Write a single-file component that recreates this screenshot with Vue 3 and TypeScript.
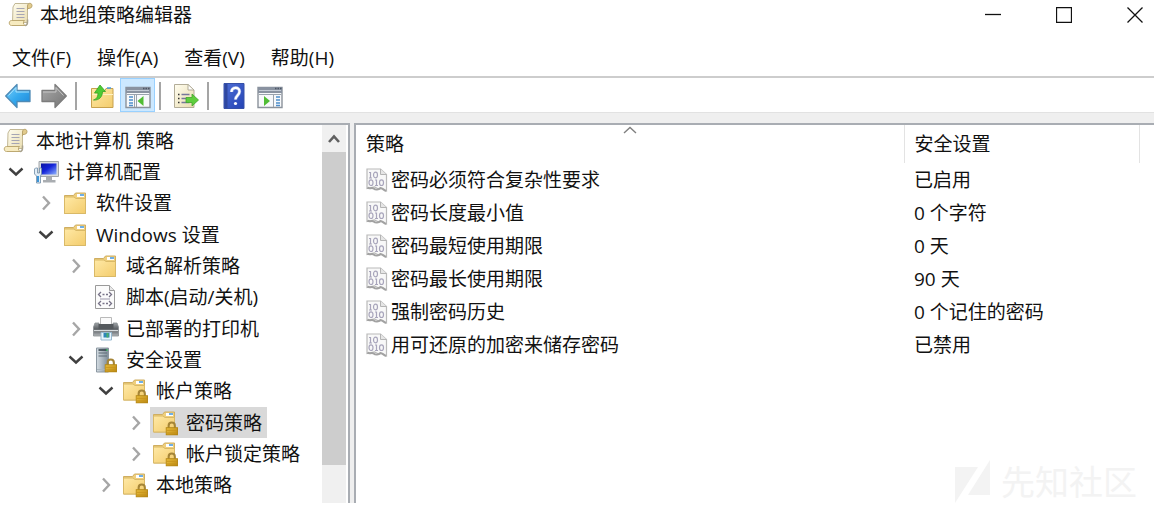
<script setup lang="ts">
import { ref } from 'vue'

interface TreeNode {
  label: string
  level: number
  icon: string
  state: 'open' | 'closed' | 'leaf'
}

interface Policy {
  name: string
  value: string
}

interface Tool {
  icon: string
  label: string
  active?: boolean
}

const menus: string[] = ['文件(F)', '操作(A)', '查看(V)', '帮助(H)']

const toolGroups: Tool[][] = [
  [
    { icon: 'back', label: '后退' },
    { icon: 'forward', label: '前进' },
  ],
  [
    { icon: 'up', label: '向上一级' },
    { icon: 'tree-pane', label: '显示/隐藏控制台树', active: true },
  ],
  [{ icon: 'export', label: '导出列表' }],
  [
    { icon: 'help', label: '帮助' },
    { icon: 'action-pane', label: '显示/隐藏操作窗格' },
  ],
]

const nodes: TreeNode[] = [
  { label: '本地计算机 策略', level: 0, icon: 'scroll', state: 'leaf' },
  { label: '计算机配置', level: 1, icon: 'computer', state: 'open' },
  { label: '软件设置', level: 2, icon: 'folder', state: 'closed' },
  { label: 'Windows 设置', level: 2, icon: 'folder', state: 'open' },
  { label: '域名解析策略', level: 3, icon: 'folder', state: 'closed' },
  { label: '脚本(启动/关机)', level: 3, icon: 'script', state: 'leaf' },
  { label: '已部署的打印机', level: 3, icon: 'printer', state: 'closed' },
  { label: '安全设置', level: 3, icon: 'server', state: 'open' },
  { label: '帐户策略', level: 4, icon: 'locked', state: 'open' },
  { label: '密码策略', level: 5, icon: 'locked', state: 'closed' },
  { label: '帐户锁定策略', level: 5, icon: 'locked', state: 'closed' },
  { label: '本地策略', level: 4, icon: 'locked', state: 'closed' },
]

const policies: Policy[] = [
  { name: '密码必须符合复杂性要求', value: '已启用' },
  { name: '密码长度最小值', value: '0 个字符' },
  { name: '密码最短使用期限', value: '0 天' },
  { name: '密码最长使用期限', value: '90 天' },
  { name: '强制密码历史', value: '0 个记住的密码' },
  { name: '用可还原的加密来储存密码', value: '已禁用' },
]

const selected = ref<string>('密码策略')
</script>

<template>
  <div class="window">
    <svg class="sprite" width="0" height="0" aria-hidden="true">
      <defs>
        <linearGradient id="g-blue" x1="0" y1="0" x2="1" y2="1">
          <stop offset="0" stop-color="#7fd3fb" />
          <stop offset="0.5" stop-color="#35a9ee" />
          <stop offset="1" stop-color="#1c86d6" />
        </linearGradient>
        <linearGradient id="g-gray" x1="0" y1="0" x2="1" y2="1">
          <stop offset="0" stop-color="#a9a9a9" />
          <stop offset="1" stop-color="#747474" />
        </linearGradient>
        <linearGradient id="g-folder" x1="0" y1="0" x2="1" y2="1">
          <stop offset="0" stop-color="#ffe9a6" />
          <stop offset="1" stop-color="#f3cc6c" />
        </linearGradient>
        <linearGradient id="g-lock" x1="0" y1="0" x2="1" y2="1">
          <stop offset="0" stop-color="#f0c544" />
          <stop offset="1" stop-color="#b9850f" />
        </linearGradient>
        <linearGradient id="g-help" x1="0" y1="0" x2="1" y2="1">
          <stop offset="0" stop-color="#4f6fd6" />
          <stop offset="1" stop-color="#2443b4" />
        </linearGradient>
        <linearGradient id="g-paper" x1="0" y1="0" x2="1" y2="1">
          <stop offset="0" stop-color="#fffdf0" />
          <stop offset="1" stop-color="#e9dcae" />
        </linearGradient>
        <linearGradient id="g-screen" x1="0" y1="0" x2="1" y2="1">
          <stop offset="0" stop-color="#0a12a0" />
          <stop offset="0.45" stop-color="#1424d8" />
          <stop offset="1" stop-color="#8fb4ff" />
        </linearGradient>
        <linearGradient id="g-printer" x1="0" y1="0" x2="0" y2="1">
          <stop offset="0" stop-color="#a0a4a8" />
          <stop offset="0.5" stop-color="#55595d" />
          <stop offset="1" stop-color="#b4b8bb" />
        </linearGradient>
        <linearGradient id="g-server" x1="0" y1="0" x2="1" y2="0">
          <stop offset="0" stop-color="#d5dde3" />
          <stop offset="1" stop-color="#7d8b97" />
        </linearGradient>
      </defs>

      <symbol id="i-back" viewBox="0 0 26 26">
        <path d="M.7 13 12 1.500v6H25v11H12v6Z" fill="url(#g-blue)" stroke="#4f8ab5" stroke-width="1.300" stroke-linejoin="round" />
        <path d="M3.500 12.500 11 4.500v4.500h13" fill="none" stroke="#a9e2fc" />
      </symbol>
      <symbol id="i-forward" viewBox="0 0 26 26">
        <path d="M25.300 13 14 1.500v6H1v11h13v6Z" fill="url(#g-gray)" stroke="#7c7c7c" stroke-width="1.300" stroke-linejoin="round" />
        <path d="M22.500 12.500 15 4.500v4.500H2" fill="none" stroke="#c6c6c6" />
      </symbol>
      <symbol id="i-up" viewBox="0 0 26 26">
        <path d="M2.500 8V5.500h8l2 2H16l1-2h7V24.500h-21.500Z" fill="url(#g-folder)" stroke="#c7a14e" />
        <path d="M3 11.500h21" stroke="#fff2c2" />
        <path d="M18 5h4" stroke="#4a9be0" stroke-width="1.500" />
        <path d="M4.500 17c3.500-1 4.500-4 4.500-7H5.500L11 2l5.500 6.500H13.500c0 5-3 9-9 8.500Z" fill="#4ecb34" stroke="#35a322" stroke-width="0.800" stroke-linejoin="round" />
      </symbol>
      <symbol id="i-tree-pane" viewBox="0 0 26 26">
        <path d="M1 4.500h24v20H1Z" fill="#f7f9fb" stroke="#8b929b" stroke-width="1.400" />
        <path d="M1 4h24v6H1Z" fill="#8992a0" />
        <path d="M2 7.500h22" stroke="#c2c9d3" />
        <path d="M18 5.500h1.500M20.500 5.500h1.500M23 5.500h1.500" stroke="#4b5564" stroke-width="1.300" />
        <path d="M2 11.500h22M9.500 11v13M11.500 11v13" stroke="#9aa3ae" />
        <path d="M4 14h4M4 17h4M4 20h4M4 22.500h4" stroke="#4f8ecb" stroke-width="1.400" />
        <path d="M18.500 13v10l-6-5Z" fill="#50bd35" />
      </symbol>
      <symbol id="i-action-pane" viewBox="0 0 26 26">
        <path d="M1 4.500h24v20H1Z" fill="#f7f9fb" stroke="#8b929b" stroke-width="1.400" />
        <path d="M1 4h24v6H1Z" fill="#8992a0" />
        <path d="M2 7.500h22" stroke="#c2c9d3" />
        <path d="M18 5.500h1.500M20.500 5.500h1.500M23 5.500h1.500" stroke="#4b5564" stroke-width="1.300" />
        <path d="M2 11.500h22M16.500 11v13" stroke="#9aa3ae" />
        <path d="M19 14h4M19 17h4M19 20h4M19 22.500h4" stroke="#4f8ecb" stroke-width="1.400" />
        <path d="M7 13v10l6-5Z" fill="#50bd35" />
      </symbol>
      <symbol id="i-export" viewBox="0 0 26 26">
        <path d="M1.500 1.500h13.500l6 5.500v17.500H1.500Z" fill="url(#g-paper)" stroke="#b3ad98" />
        <path d="M15 1.500V7h6Z" fill="#fff" stroke="#b3ad98" />
        <path d="M5 11.500h1.500M5 15.500h1.500M5 19.500h1.500" stroke="#333" stroke-width="1.500" />
        <path d="M8.500 11.500h8M8.500 15.500h6M8.500 19.500h8" stroke="#77789a" stroke-width="1.300" />
        <path d="M13 14.500h6V11l6.500 6-6.500 6v-3.500h-6Z" fill="#5fce3e" stroke="#43a72c" stroke-width="0.800" />
      </symbol>
      <symbol id="i-help" viewBox="0 0 26 26">
        <path d="M3 .500h20v25H3Z" fill="url(#g-help)" stroke="#3650a8" />
        <path d="M3.500 1h3v24h-3Z" fill="#2f479f" />
        <path d="M10.500 9c0-5.500 8-5.500 8-.500 0 4-4 4-4 8" fill="none" stroke="#8fa3e0" stroke-width="3.400" />
        <path d="M10.500 9c0-5.500 8-5.500 8-.500 0 4-4 4-4 8" fill="none" stroke="#fff" stroke-width="2.200" />
        <circle cx="14.500" cy="20.500" r="1.600" fill="#fff" />
      </symbol>

      <symbol id="i-scroll" viewBox="0 0 26 26">
        <path d="M7 1.500h14l-1.500 3v16H4.500L5 5Z" fill="url(#g-paper)" stroke="#c2b896" />
        <path d="M19.500 8V4c0-3.500 4.500-3.500 4.500-.500C24 6 22 6.500 20 6.500" fill="#e2cb8c" stroke="#b9a36b" />
        <path d="M3.500 18.500h13c-1.500 1-1.500 4 .5 5H3.500c-3 0-3-5 0-5Z" fill="#f7ebc0" stroke="#bda972" />
        <path d="M17 23.500c2 0 2.500-1.500 2.500-4v-2" fill="none" stroke="#a9a28c" stroke-width="1.600" />
        <path d="M8.500 6.500h8M8.500 9.500h8M8.500 12.500h8M8.500 15.500h8" stroke="#a6a5b4" stroke-width="1.200" />
      </symbol>
      <symbol id="i-computer" viewBox="0 0 26 26">
        <path d="M6 2.500h19.500v15H6Z" fill="#d9dcde" stroke="#a2a7ab" />
        <path d="M8 4.500h15.500v11H8Z" fill="url(#g-screen)" />
        <path d="M13 18h6v3h3.500v2.500H10V21h3Z" fill="#a9adb1" />
        <path d="M2.500 9h2v5h2V9h2v6l-1 2v7h-4v-7l-2-2v-5Z" fill="#e1edf6" stroke="#6e8ca4" stroke-width="0.800" />
        <path d="M5 17v6" stroke="#3c94d6" stroke-width="2" />
      </symbol>
      <symbol id="i-folder" viewBox="0 0 26 26">
        <path d="M1.500 5.500h9l2-2.500h10v20.500h-21Z" fill="#efcf7d" stroke="#cfae62" />
        <path d="M14 4h7v3h-7Z" fill="#fff" />
        <path d="M17 5h4" stroke="#4a9be0" stroke-width="1.600" />
        <path d="M1.500 7h9.500l2 1.500h9.500v15h-21Z" fill="url(#g-folder)" stroke="#d9b967" />
      </symbol>
      <symbol id="i-padlock" viewBox="0 0 12 14">
        <path d="M3 7V4.500c0-4 6-4 6 0V7" fill="none" stroke="#a58537" stroke-width="2" />
        <path d="M.5 6.500h11v7H.5Z" fill="url(#g-lock)" stroke="#b38616" />
        <path d="M1 9h10M1 11.500h10" stroke="#c6931b" />
      </symbol>
      <symbol id="i-locked" viewBox="0 0 26 26">
        <path d="M.5 4.500h9l2-2.500h10v20h-21Z" fill="#efcf7d" stroke="#cfae62" />
        <path d="M13 3h7v3h-7Z" fill="#fff" />
        <path d="M16 4h4" stroke="#4a9be0" stroke-width="1.600" />
        <path d="M.5 6h9.500l2 1.500h9.500V22h-21Z" fill="url(#g-folder)" stroke="#d9b967" />
        <use href="#i-padlock" x="12.500" y="11" width="12.500" height="14.500" />
      </symbol>
      <symbol id="i-script" viewBox="0 0 26 26">
        <path d="M2.500 1.500h14l5 5v18h-19Z" fill="#fbfbfb" stroke="#9a9a9a" />
        <path d="M16.500 1.500v5h5" fill="#e8e8e8" stroke="#9a9a9a" />
        <path d="M8 8 5.500 10.500 8 13M16 8l2.500 2.500L16 13M9.500 10.500h2M13 10.500h2M8 17l-2.500 2.500L8 22M16 17l2.500 2.500L16 22M9.500 19.500h2M13 19.500h2" fill="none" stroke="#777287" stroke-width="1.300" />
        <path d="M7 15h10" stroke="#9b97aa" />
      </symbol>
      <symbol id="i-printer" viewBox="0 0 26 26">
        <path d="M7.500 1.500h11v7h-11Z" fill="#fafafa" stroke="#b9b9b9" />
        <path d="M2 7h4v2h14V7h4l1.500 4v9H.5v-9Z" fill="url(#g-printer)" stroke="#888d91" stroke-width="0.800" />
        <path d="M5.500 8h15v6.500h-15Z" fill="#54585c" />
        <path d="M1 14.500h24" stroke="#d7dadc" stroke-width="1.300" />
        <path d="M8 16.500h10.500V24H8Z" fill="#e9f5fd" stroke="#96b9cf" />
        <path d="M10.500 17h6v4.500h-6Z" fill="#2f87b8" />
        <path d="M13.500 17h2v4.500h-2Z" fill="#4caf6b" />
      </symbol>
      <symbol id="i-server" viewBox="0 0 26 26">
        <path d="M3.500 1h12v24h-12Z" fill="url(#g-server)" stroke="#8c98a2" />
        <path d="M5.500 3h8.500" stroke="#2e3b46" stroke-width="1.500" />
        <path d="M5.500 6h8.500M5.500 9h8.500" stroke="#5d6b77" />
        <path d="M13 3h1.500" stroke="#33c25a" stroke-width="1.500" />
        <path d="M4 22.500h11" stroke="#aab5bd" />
        <use href="#i-padlock" x="11.500" y="11" width="12.500" height="14.500" />
      </symbol>
      <symbol id="i-policy" viewBox="0 0 22 24">
        <path d="M1 1h13.500l6 5.500V23l-4.500-2.500-3.500.5-4-2-7.500 1.500Z" fill="#f8f8f8" stroke="#bababa" stroke-width="1.200" />
        <path d="M14.500 1v5.500h6" fill="#e6e6e6" stroke="#b4b4b4" />
        <path d="M1.500 19.500c2 2 4-.500 6 1s5 1.500 7-.500c2 0 3 2 5.500 3" fill="none" stroke="#a2a2a2" stroke-width="2" />
        <g fill="none" stroke="#a8a5bb" stroke-width="1.200">
          <path d="M3 4.500h1.500v5.500M3 10h3M9 12h1.500v5.500M9 17.500h3" />
          <ellipse cx="9.500" cy="7" rx="2" ry="2.800" />
          <ellipse cx="5" cy="14.700" rx="2" ry="2.800" />
          <ellipse cx="15.500" cy="14.700" rx="2" ry="2.800" />
        </g>
      </symbol>
    </svg>

    <header class="titlebar">
      <svg class="icon"><use href="#i-scroll" /></svg>
      <h1 class="title">本地组策略编辑器</h1>
      <div class="controls">
        <button class="control" type="button" aria-label="最小化">
          <svg viewBox="0 0 16 16"><path d="M0 7.500h16" /></svg>
        </button>
        <button class="control" type="button" aria-label="最大化">
          <svg viewBox="0 0 16 16"><path d="M.5 .5h15v15H.5Z" /></svg>
        </button>
        <button class="control" type="button" aria-label="关闭">
          <svg viewBox="0 0 16 16"><path d="m.5 .5 15 15M15.500 .5l-15 15" /></svg>
        </button>
      </div>
    </header>

    <nav class="menubar">
      <button v-for="menu in menus" :key="menu" class="menu" type="button">{{ menu }}</button>
    </nav>

    <div class="toolbar" role="toolbar">
      <template v-for="(group, index) in toolGroups" :key="index">
        <span v-if="index > 0" class="divider"></span>
        <button
          v-for="tool in group"
          :key="tool.icon"
          class="tool"
          :class="{ active: tool.active }"
          type="button"
          :aria-label="tool.label"
        >
          <svg class="icon"><use :href="'#i-' + tool.icon" /></svg>
        </button>
      </template>
    </div>

    <main class="workspace">
      <section class="pane tree-pane">
        <ul class="tree">
          <li
            v-for="node in nodes"
            :key="node.label"
            class="row"
            :style="{ paddingLeft: Math.max(node.level - 1, 0) * 30 + 'px' }"
          >
            <button
              v-if="node.state !== 'leaf'"
              class="toggle"
              :class="node.state"
              type="button"
              :aria-label="(node.state === 'open' ? '折叠 ' : '展开 ') + node.label"
            >
              <svg v-if="node.state === 'open'" viewBox="0 0 16 16"><path d="m1.500 4.500 6.500 6 6.500-6" /></svg>
              <svg v-else viewBox="0 0 16 16"><path d="m5 1.500 6 6.500-6 6.500" /></svg>
            </button>
            <span v-else-if="node.level > 0" class="toggle"></span>
            <button
              class="node"
              :class="{ selected: selected === node.label }"
              type="button"
              @click="selected = node.label"
            >
              <svg class="icon"><use :href="'#i-' + node.icon" /></svg>
              <span>{{ node.label }}</span>
            </button>
          </li>
        </ul>
        <div class="scrollbar">
          <button class="scroll-up" type="button" aria-label="向上滚动">
            <svg viewBox="0 0 16 16"><path d="m3 11 5-5.500 5 5.500" /></svg>
          </button>
          <div class="thumb"></div>
        </div>
      </section>

      <section class="pane list-pane">
        <table class="policies">
          <colgroup>
            <col class="col-name" />
            <col class="col-value" />
            <col />
          </colgroup>
          <thead>
            <tr>
              <th scope="col">
                策略
                <svg class="sort" viewBox="0 0 14 8"><path d="m1 7 6-5.500L13 7" /></svg>
              </th>
              <th scope="col">安全设置</th>
              <td></td>
            </tr>
          </thead>
          <tbody>
            <tr v-for="policy in policies" :key="policy.name">
              <td>
                <div class="policy">
                  <svg class="policy-icon"><use href="#i-policy" /></svg>
                  <span>{{ policy.name }}</span>
                </div>
              </td>
              <td>{{ policy.value }}</td>
              <td></td>
            </tr>
          </tbody>
        </table>
      </section>
    </main>

    <div class="watermark" aria-hidden="true">
      <svg viewBox="0 0 36 44"><path d="M0 7h23L0 43ZM35 0v35H13Z" /></svg>
      <span>先知社区</span>
    </div>
  </div>
</template>

<style>
body {
  margin: 0;
  background: #fff;
}
</style>

<style scoped>
.window {
  position: relative;
  display: flex;
  flex-direction: column;
  box-sizing: border-box;
  height: 100vh;
  padding-bottom: 3px;
  overflow: hidden;
  background: #fff;
  color: #111;
  font-family: 'Open Sans', 'Noto Sans CJK SC', sans-serif;
  font-size: 19px;
  line-height: 28px;
}

button {
  margin: 0;
  padding: 0;
  border: 0;
  background: none;
  color: inherit;
  font: inherit;
}

.sprite {
  position: absolute;
}

.icon {
  flex: none;
  width: 26px;
  height: 26px;
}

.titlebar {
  display: flex;
  align-items: center;
  flex: none;
  height: 30px;
  padding: 0 11px 0 8px;
}

.title {
  flex: 1;
  margin: 0 0 0 6px;
  font-size: 19px;
  font-weight: 400;
}

.controls {
  display: flex;
  gap: 55px;
}

.control svg {
  display: block;
  width: 16px;
  height: 16px;
  fill: none;
  stroke: #111;
  stroke-width: 1.3;
}

.menubar {
  display: flex;
  flex: none;
  gap: 26px;
  padding: 14px 12px 4px;
  border-bottom: 2px solid #cdcdcd;
}

.toolbar {
  display: flex;
  flex: none;
  gap: 1px;
  height: 34px;
  border-bottom: 1px solid #e2e2e2;
}

.tool {
  display: flex;
  align-items: center;
  justify-content: center;
  box-sizing: border-box;
  width: 35px;
  padding-top: 2px;
}

.tool.active {
  border: 1px solid #99d1ff;
  background: #cce8ff;
}

.divider {
  width: 2px;
  margin: 4px 6px 2px 3px;
  background: #a5a5a5;
}

.workspace {
  display: flex;
  flex: 1;
  gap: 4px;
  min-height: 0;
  padding-top: 10px;
  background: #efefef;
}

.pane {
  box-sizing: border-box;
  border-top: 2px solid #a9adb3;
  background: #fff;
}

.tree-pane {
  display: flex;
  flex: none;
  width: 350px;
  border-right: 2px solid #a9adb3;
}

.tree {
  display: flex;
  flex: 1;
  flex-direction: column;
  margin: 0;
  padding: 0 0 2px;
  list-style: none;
}

.row {
  display: flex;
  flex: 1;
  align-items: stretch;
  min-height: 0;
}

.toggle {
  display: flex;
  align-items: center;
  justify-content: center;
  width: 30px;
  padding-left: 1px;
  box-sizing: border-box;
}

.toggle svg {
  width: 16px;
  height: 16px;
  fill: none;
  stroke: #a6a6a6;
  stroke-width: 2.4;
}

.toggle.open svg {
  stroke: #404040;
}

.node {
  display: flex;
  align-items: center;
  gap: 7px;
  padding: 0 5px 0 3px;
  white-space: nowrap;
}

.node.selected {
  background: #d9d9d9;
}

.scrollbar {
  display: flex;
  flex-direction: column;
  width: 24px;
  margin-right: 2px;
  padding-top: 1px;
  background: #f0f0f0;
}

.scroll-up {
  display: flex;
  align-items: center;
  justify-content: center;
  height: 26px;
}

.scroll-up svg {
  width: 16px;
  height: 16px;
  fill: none;
  stroke: #606060;
  stroke-width: 2.6;
}

.thumb {
  height: 83%;
  background: #cdcdcd;
}

.list-pane {
  flex: 1;
  min-width: 0;
  border-left: 2px solid #a9adb3;
}

.policies {
  width: 100%;
  border-collapse: collapse;
  table-layout: fixed;
}

.col-name {
  width: 548px;
}

.col-value {
  width: 235px;
}

th,
td {
  padding: 0 0 0 10px;
  font-weight: 400;
  text-align: left;
  white-space: nowrap;
}

thead th {
  position: relative;
  height: 38px;
  border-right: 1px solid #e3e3e3;
}

tbody td {
  height: 33px;
}

.sort {
  position: absolute;
  top: 1px;
  left: 50%;
  width: 14px;
  height: 8px;
  margin-left: -7px;
  fill: none;
  stroke: #808080;
  stroke-width: 1.4;
}

.policy {
  display: flex;
  align-items: center;
  gap: 3px;
}

.policy-icon {
  width: 22px;
  height: 24px;
}

.watermark {
  position: absolute;
  right: 17px;
  bottom: 2px;
  display: flex;
  align-items: center;
  gap: 10px;
  color: #f3f3f3;
  font-size: 34px;
  line-height: 44px;
}

.watermark svg {
  width: 36px;
  height: 44px;
  fill: #f3f3f3;
}
</style>
